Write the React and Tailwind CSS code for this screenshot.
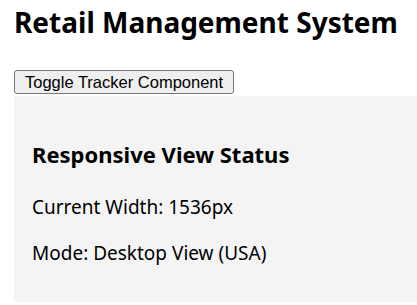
import React, { useState } from 'react';

const ResponsiveTracker = () => {
  const width = 1536;
  const mode = width >= 1024 ? 'Desktop View (USA)' : 'Mobile View';

  return (
    <div className="bg-[#f4f4f4] pl-[18px] pt-[44px] pb-[37px] mt-[2px] w-[1536px]">
      <h3 className="text-[22px] font-bold leading-[28px]">Responsive View Status</h3>
      <p className="text-[19px] leading-[24px] mt-[27px]">Current Width: {width}px</p>
      <p className="text-[19px] leading-[24px] mt-[22px]">Mode: {mode}</p>
    </div>
  );
};

export default function App() {
  const [showTracker, setShowTracker] = useState(true);

  return (
    <div className="px-[14px] text-black font-['Noto_Sans',sans-serif] overflow-hidden">
      <h1 className="text-[28px] font-bold pt-[5px] leading-[34px] whitespace-nowrap">Retail Management System</h1>
      <button
        onClick={() => setShowTracker(!showTracker)}
        className="block mt-[31px] font-['Liberation_Sans',Arial,sans-serif] text-[16.5px] px-[10px] h-[24px] bg-[#efefef] border border-[#767676] rounded-[3px] leading-none"
      >
        Toggle Tracker Component
      </button>
      {showTracker && <ResponsiveTracker />}
    </div>
  );
}
